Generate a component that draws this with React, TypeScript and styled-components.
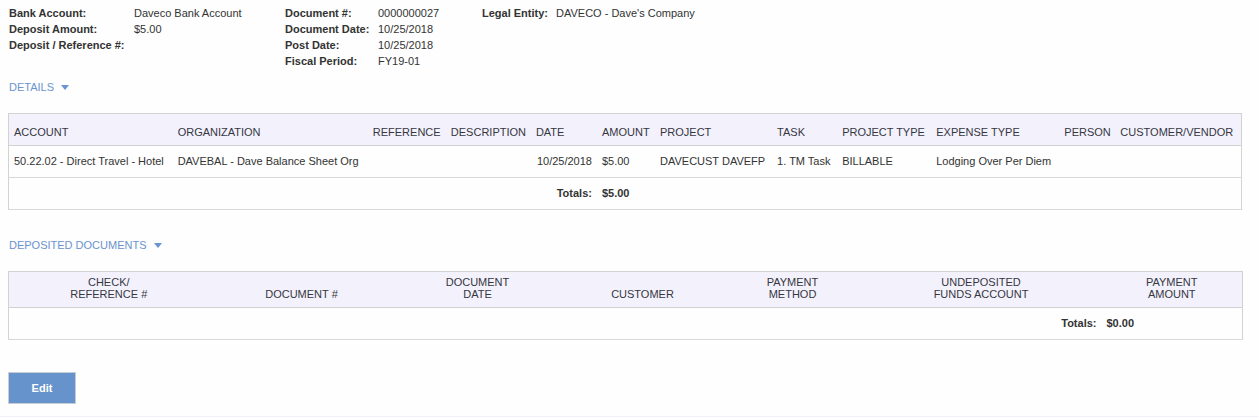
import * as React from 'react';
import styled, { createGlobalStyle } from 'styled-components';

const GlobalStyle = createGlobalStyle`
  html, body {
    margin: 0;
    padding: 0;
    background: #fdfefd;
  }
  body {
    font-family: 'Liberation Sans', Arial, sans-serif;
    font-size: 11px;
    color: #333;
  }
`;

const Page = styled.div`
  padding: 5px 16px 0 8px;
  min-height: 411px;
  border-bottom: 1px solid #f1f0fa;
`;

const Info = styled.div`
  display: flex;
  padding-left: 1px;
`;

const InfoGroup = styled.div<{ $label: number; $width: number }>`
  display: grid;
  grid-template-columns: ${(p) => p.$label}px 1fr;
  width: ${(p) => p.$width}px;
  grid-auto-rows: 16px;
  line-height: 16px;
`;

const Label = styled.div`
  font-weight: bold;
  white-space: nowrap;
`;

const Value = styled.div`
  white-space: nowrap;
`;

const SectionToggle = styled.div<{ $top: number }>`
  display: flex;
  align-items: center;
  gap: 7px;
  margin-top: ${(p) => p.$top}px;
  padding-left: 1px;
  line-height: 16px;
  color: #6c93cf;
  text-transform: uppercase;
  cursor: pointer;
`;

const Caret = styled.span`
  width: 0;
  height: 0;
  border-left: 4px solid transparent;
  border-right: 4px solid transparent;
  border-top: 5px solid #6c93cf;
  margin-top: 1px;
`;

const Table = styled.table`
  width: 1234px;
  margin-top: 18px;
  border-collapse: collapse;
  table-layout: fixed;
  border: 1px solid #d2d2d2;
  background: #fdfefd;
`;

const HeadRow = styled.tr`
  background: #f3f2fc;
  border-bottom: 1px solid #d2d2d2;
`;

const Th = styled.th<{ $center?: boolean }>`
  font-weight: normal;
  text-align: ${(p) => (p.$center ? 'center' : 'left')};
  vertical-align: bottom;
  color: #36363f;
  white-space: nowrap;
  padding: ${(p) => (p.$center ? '4px 4px 7px' : '11px 5px 6px')};
  line-height: ${(p) => (p.$center ? '12px' : '14px')};
`;

const Row = styled.tr`
  border-bottom: 1px solid #d8d8d8;
`;

const Td = styled.td<{ $bold?: boolean; $right?: boolean }>`
  padding: 8px 5px 9px;
  line-height: 14px;
  white-space: nowrap;
  overflow: hidden;
  font-weight: ${(p) => (p.$bold ? 'bold' : 'normal')};
  text-align: ${(p) => (p.$right ? 'right' : 'left')};
`;

const EditButton = styled.button`
  display: block;
  margin-top: 32px;
  width: 68px;
  height: 32px;
  background: #6693cc;
  border: 1px solid #c8ccd4;
  color: #fff;
  font-family: 'Liberation Sans', Arial, sans-serif;
  font-size: 11px;
  font-weight: bold;
  cursor: pointer;
`;

const detailCols = [
  ['Account', 164],
  ['Organization', 195],
  ['Reference', 78],
  ['Description', 85],
  ['Date', 66],
  ['Amount', 58],
  ['Project', 117],
  ['Task', 65],
  ['Project Type', 94],
  ['Expense Type', 128],
  ['Person', 56],
  ['Customer/Vendor', 126],
] as const;

const detailRow = [
  '50.22.02 - Direct Travel - Hotel',
  'DAVEBAL - Dave Balance Sheet Org',
  '',
  '',
  '10/25/2018',
  '$5.00',
  'DAVECUST DAVEFP',
  '1. TM Task',
  'BILLABLE',
  'Lodging Over Per Diem',
  '',
  '',
];

const docCols: [string[], number][] = [
  [['CHECK/', 'REFERENCE #'], 200],
  [['DOCUMENT #'], 186],
  [['DOCUMENT', 'DATE'], 166],
  [['CUSTOMER'], 164],
  [['PAYMENT', 'METHOD'], 136],
  [['UNDEPOSITED', 'FUNDS ACCOUNT'], 241],
  [['PAYMENT', 'AMOUNT'], 141],
];

export default function App() {
  return (
    <>
      <GlobalStyle />
      <Page>
        <Info>
          <InfoGroup $label={125} $width={276}>
            <Label>Bank Account:</Label>
            <Value>Daveco Bank Account</Value>
            <Label>Deposit Amount:</Label>
            <Value>$5.00</Value>
            <Label>Deposit / Reference #:</Label>
            <Value />
          </InfoGroup>
          <InfoGroup $label={93} $width={197}>
            <Label>Document #:</Label>
            <Value>0000000027</Value>
            <Label>Document Date:</Label>
            <Value>10/25/2018</Value>
            <Label>Post Date:</Label>
            <Value>10/25/2018</Value>
            <Label>Fiscal Period:</Label>
            <Value>FY19-01</Value>
          </InfoGroup>
          <InfoGroup $label={74} $width={300}>
            <Label>Legal Entity:</Label>
            <Value>DAVECO - Dave's Company</Value>
          </InfoGroup>
        </Info>

        <SectionToggle $top={10}>
          Details <Caret />
        </SectionToggle>

        <Table>
          <colgroup>
            {detailCols.map(([name, w]) => (
              <col key={name} style={{ width: w }} />
            ))}
          </colgroup>
          <thead>
            <HeadRow>
              {detailCols.map(([name]) => (
                <Th key={name}>{name.toUpperCase()}</Th>
              ))}
            </HeadRow>
          </thead>
          <tbody>
            <Row>
              {detailRow.map((v, i) => (
                <Td key={i} $right={i === 4}>
                  {v}
                </Td>
              ))}
            </Row>
            <Row>
              <Td colSpan={4} />
              <Td $bold $right>Totals:</Td>
              <Td $bold>$5.00</Td>
              <Td colSpan={6} />
            </Row>
          </tbody>
        </Table>

        <SectionToggle $top={27}>
          Deposited Documents <Caret />
        </SectionToggle>

        <Table>
          <colgroup>
            {docCols.map(([name, w]) => (
              <col key={name.join()} style={{ width: w }} />
            ))}
          </colgroup>
          <thead>
            <HeadRow>
              {docCols.map(([lines]) => (
                <Th $center key={lines.join()}>
                  {lines.map((l, i) => (
                    <React.Fragment key={l}>
                      {i > 0 && <br />}
                      {l}
                    </React.Fragment>
                  ))}
                </Th>
              ))}
            </HeadRow>
          </thead>
          <tbody>
            <Row>
              <Td colSpan={5} />
              <Td $bold $right>Totals:</Td>
              <Td $bold>$0.00</Td>
            </Row>
          </tbody>
        </Table>

        <EditButton>Edit</EditButton>
      </Page>
    </>
  );
}
